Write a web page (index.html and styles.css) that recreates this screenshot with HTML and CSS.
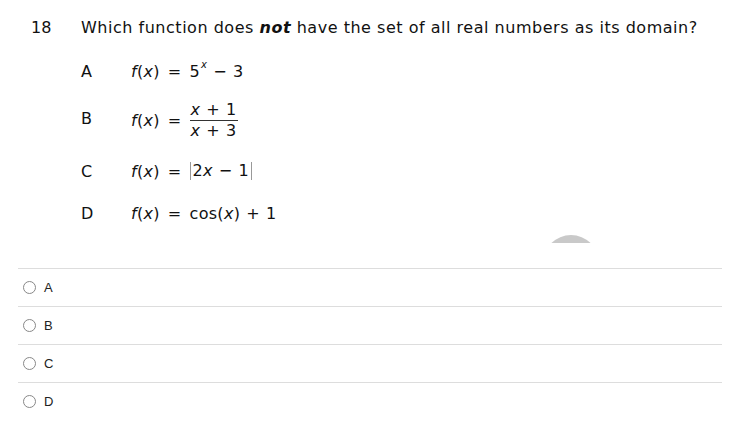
FILE: index.html
```html
<!DOCTYPE html>
<html>
<head>
<meta charset="utf-8">
<link rel="stylesheet" href="styles.css">
</head>
<body>
<div class="page">
  <div class="question">
    <div class="qnum">18</div>
    <div class="qtext">Which function does <b class="em">not</b> have the set of all real numbers as its domain?</div>
  </div>
  <div class="options">
    <div class="opt opt-a">
      <div class="olabel">A</div>
      <div class="formula"><i class="v">f</i>(<i class="v">x</i>)<span class="eq">=</span>5<sup class="sup"><i class="v">x</i></sup><span class="op">&minus;</span>3</div>
    </div>
    <div class="opt opt-b">
      <div class="olabel lbl-b">B</div>
      <div class="formula"><i class="v">f</i>(<i class="v">x</i>)<span class="eq">=</span><span class="frac"><span class="num"><i class="v">x</i><span class="op">+</span>1</span><span class="den"><i class="v">x</i><span class="op">+</span>3</span></span></div>
    </div>
    <div class="opt opt-c">
      <div class="olabel">C</div>
      <div class="formula"><i class="v">f</i>(<i class="v">x</i>)<span class="eq">=</span><span class="abs">2<i class="v">x</i><span class="op">&minus;</span>1</span></div>
    </div>
    <div class="opt opt-d">
      <div class="olabel">D</div>
      <div class="formula"><i class="v">f</i>(<i class="v">x</i>)<span class="eq">=</span>cos(<i class="v">x</i>)<span class="op">+</span>1</div>
    </div>
  </div>
  <div class="spinner-row"><div class="spinner"><div class="spinner-disc"></div></div></div>
  <div class="answers">
    <label class="answer"><span class="radio"></span><span class="alabel">A</span></label>
    <label class="answer"><span class="radio"></span><span class="alabel">B</span></label>
    <label class="answer"><span class="radio"></span><span class="alabel">C</span></label>
    <label class="answer"><span class="radio"></span><span class="alabel">D</span></label>
  </div>
</div>
</body>
</html>
```
FILE: styles.css
```css
html, body {
  margin: 0;
  padding: 0;
  background: #fff;
}
.page {
  font-family: "DejaVu Sans", Verdana, sans-serif;
  color: #111;
  font-size: 16px;
  width: 737px;
  height: 435px;
  overflow: hidden;
}
.question {
  display: flex;
  padding-top: 18px;
  line-height: 20px;
  height: 20px;
}
.qnum {
  width: 50px;
  padding-left: 31px;
}
.qtext {
  white-space: nowrap;
  letter-spacing: 0.52px;
}
.em {
  font-weight: bold;
  font-style: italic;
}
.v {
  font-style: italic;
  font-synthesis: style;
}
.options {
  padding-left: 81px;
}
.opt {
  display: flex;
  align-items: center;
  height: 26px;
}
.opt-a { margin-top: 20px; }
.opt-b { margin-top: 12px; height: 48px; }
.opt-c { margin-top: 14px; }
.opt-d { margin-top: 16px; }
.olabel {
  width: 50px;
}
.lbl-b {
  position: relative;
  top: -2px;
}
.formula {
  display: flex;
  align-items: center;
  white-space: nowrap;
  letter-spacing: 0.3px;
}
.eq {
  padding: 0 8px;
}
.op {
  padding: 0 6px;
}
.sup {
  font-size: 10px;
  position: relative;
  top: -6px;
  padding-left: 1px;
  vertical-align: baseline;
  line-height: 0;
}
.frac {
  display: inline-flex;
  flex-direction: column;
  align-items: center;
}
.num {
  padding: 0 1px 1px;
  border-bottom: 1px solid #333;
  line-height: 19px;
}
.den {
  padding: 0 1px;
  line-height: 19px;
}
.abs {
  border-left: 1px solid #999;
  border-right: 1px solid #999;
  padding: 0 2px;
  line-height: 18px;
}
.spinner-row {
  position: relative;
  height: 42px;
}
.spinner {
  position: absolute;
  left: 551px;
  top: 9px;
  width: 40px;
  height: 8px;
  overflow: hidden;
}
.spinner-disc {
  position: absolute;
  left: -8px;
  top: 0;
  width: 56px;
  height: 56px;
  border-radius: 50%;
  background: #c9c9c9;
}
.answers {
  margin-left: 18px;
  width: 704px;
}
.answer {
  display: flex;
  align-items: center;
  height: 37px;
  border-top: 1px solid #dddddd;
  padding-left: 5px;
  font-family: "Liberation Sans", Arial, sans-serif;
  font-size: 13px;
  color: #222;
}
.radio {
  width: 11px;
  height: 11px;
  border: 1px solid #888;
  border-radius: 50%;
  margin-right: 8px;
  box-sizing: content-box;
}
```
